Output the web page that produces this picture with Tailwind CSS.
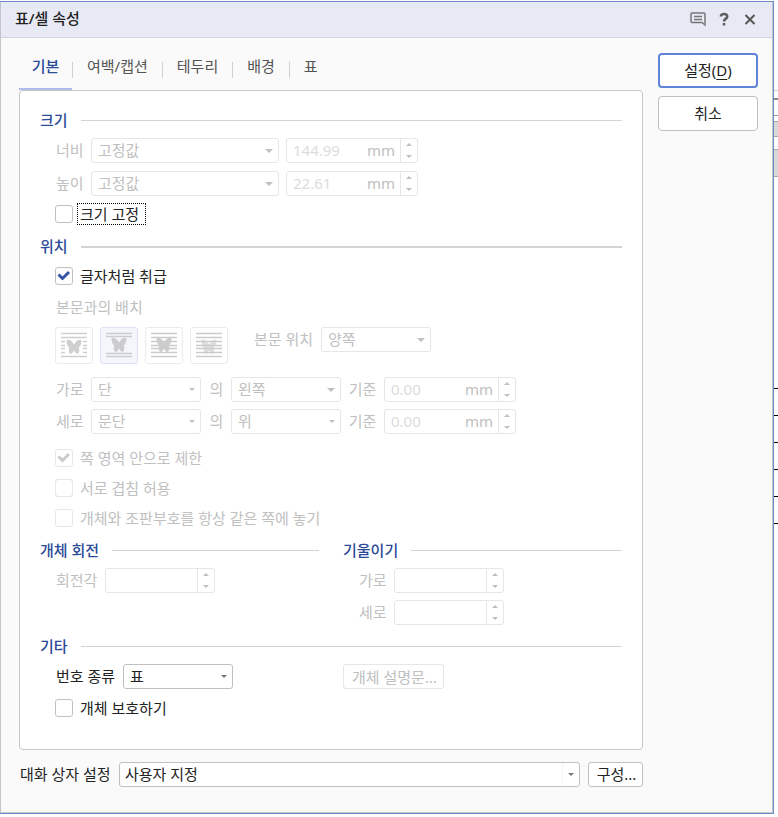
<!DOCTYPE html>
<html lang="ko">
<head>
  <meta charset="UTF-8">
  <meta name="viewport" content="width=device-width, initial-scale=1.0">
  <title>표/셀 속성</title>
  <script src="https://cdn.jsdelivr.net/npm/@tailwindcss/browser@4"></script>
</head>
<body class="bg-white flex items-start pt-px font-['Noto_Sans','Noto_Sans_CJK_KR',sans-serif] text-[15px] leading-5 text-[#222]">

  <!-- Shared shapes -->
  <svg class="hidden">
    <symbol id="down" viewBox="0 0 8 4"><path d="M0 0h8L4 4z" fill="currentColor"/></symbol>
    <symbol id="up" viewBox="0 0 8 4"><path d="M4 0l4 4H0z" fill="currentColor"/></symbol>
    <symbol id="check" viewBox="0 0 18 18"><path d="M3.500 7.500L7.500 11.500L14 5" fill="none" stroke="currentColor" stroke-width="3"/></symbol>
    <symbol id="butterfly" viewBox="0 0 16 16"><path d="M0 1c3-1 6 1 8 5 2-4 5-6 8-5 0 4-1 7-3 8 1 2 1 5-1 7-2 0-3-2-4-4-1 2-2 4-4 4-2-2-2-5-1-7-2-1-3-4-3-8z" fill="currentColor"/></symbol>
  </svg>

  <main class="flex-1 border-t border-r border-b border-[#6f8ac8]">
    <div class="border-l border-r border-b border-[#c4c5cc] bg-[#fafafa]">

      <!-- Title bar -->
      <header class="h-9 border-b border-[#d0d4e6] bg-[#e7e9f4] pl-[14px] pr-[14px] flex items-center justify-between">
        <h1 class="font-medium pb-1">표/셀 속성</h1>
        <div class="flex items-center gap-3 pb-0.5 text-[#666]">
          <button aria-label="의견" class="w-4 h-4">
            <svg viewBox="0 0 16 16" class="w-4 h-4" fill="none" stroke="#777" stroke-width="1.500"><path d="M2 2h12q1 0 1 1v11l-3-2.500H2q-1 0-1-1V3q0-1 1-1z"/><path d="M4 5.500h8M4 8.500h8"/></svg>
          </button>
          <button aria-label="도움말" class="w-3 h-4">
            <svg viewBox="0 0 12 16" class="w-3 h-4" fill="none" stroke="#5c5c5c" stroke-width="2.500"><path d="M2.800 5.500C3 2 9.300 2 9.300 5.500c0 2.300-3.300 2-3.300 5M6 12v2.500"/></svg>
          </button>
          <button aria-label="닫기" class="w-4 h-4">
            <svg viewBox="0 0 16 16" class="w-4 h-4" fill="none" stroke="#555" stroke-width="2"><path d="M3.500 4l9 9M12.500 4l-9 9"/></svg>
          </button>
        </div>
      </header>

      <div class="flex gap-[15px] pl-[18px] pr-[14px] pb-[25px]">
        <div class="flex-1">

          <!-- Tabs -->
          <nav class="flex h-[52px] text-[#555]">
            <button class="w-[53px] pb-[6px] border-b-2 border-[#aebce8] pt-3 font-medium text-[#2b4a98]">기본</button>
            <span class="w-px h-4 mt-6 bg-[#d0d0d0]"></span>
            <button class="px-[14px] pt-1">여백/캡션</button>
            <span class="w-px h-4 mt-6 bg-[#d0d0d0]"></span>
            <button class="px-[14px] pt-1">테두리</button>
            <span class="w-px h-4 mt-6 bg-[#d0d0d0]"></span>
            <button class="px-[14px] pt-1">배경</button>
            <span class="w-px h-4 mt-6 bg-[#d0d0d0]"></span>
            <button class="px-[14px] pt-1">표</button>
          </nav>

          <div class="border border-[#c6c6c6] rounded bg-white px-5 pt-[19px] pb-[30px]">

            <!-- Size -->
            <section>
              <div class="flex items-center gap-[13px] h-[21px]">
                <h2 class="font-medium pb-0.5 text-[#2b4a98]">크기</h2>
                <span class="flex-1 h-px bg-[#d4d4d4]"></span>
              </div>
              <div class="pl-[15px] mt-[7px] flex flex-col gap-2 text-[#c0c0c0]">
                <div class="flex items-center">
                  <label for="width-type" class="w-9 pl-px pb-0.5">너비</label>
                  <div class="relative w-[188px]">
                    <select id="width-type" disabled class="appearance-none block w-full h-[25px] border border-[#e6e6e6] rounded-[3px] pl-[6px] pb-0.5 disabled:opacity-100"><option>고정값</option></select>
                    <svg class="absolute right-[6px] top-[11px] w-2 h-1 pointer-events-none"><use href="#down"/></svg>
                  </div>
                  <div class="ml-[7px] w-[132px] h-[25px] flex items-center border border-[#e6e6e6] rounded-[3px]">
                    <input aria-label="너비 값" disabled value="144.99" class="min-w-0 flex-1 pl-[6px] pb-0.5 text-[#dcdcdc]">
                    <span class="mr-[5px] pb-0.5">mm</span>
                    <div class="h-full w-[17px] border-l border-[#e6e6e6] flex flex-col items-center justify-between py-1">
                      <button disabled aria-label="증가"><svg class="w-[6px] h-[3px] block"><use href="#up"/></svg></button>
                      <button disabled aria-label="감소"><svg class="w-[6px] h-[3px] block"><use href="#down"/></svg></button>
                    </div>
                  </div>
                </div>
                <div class="flex items-center">
                  <label for="height-type" class="w-9 pl-px pb-0.5">높이</label>
                  <div class="relative w-[188px]">
                    <select id="height-type" disabled class="appearance-none block w-full h-[25px] border border-[#e6e6e6] rounded-[3px] pl-[6px] pb-0.5 disabled:opacity-100"><option>고정값</option></select>
                    <svg class="absolute right-[6px] top-[11px] w-2 h-1 pointer-events-none"><use href="#down"/></svg>
                  </div>
                  <div class="ml-[7px] w-[132px] h-[25px] flex items-center border border-[#e6e6e6] rounded-[3px]">
                    <input aria-label="높이 값" disabled value="22.61" class="min-w-0 flex-1 pl-[6px] pb-0.5 text-[#dcdcdc]">
                    <span class="mr-[5px] pb-0.5">mm</span>
                    <div class="h-full w-[17px] border-l border-[#e6e6e6] flex flex-col items-center justify-between py-1">
                      <button disabled aria-label="증가"><svg class="w-[6px] h-[3px] block"><use href="#up"/></svg></button>
                      <button disabled aria-label="감소"><svg class="w-[6px] h-[3px] block"><use href="#down"/></svg></button>
                    </div>
                  </div>
                </div>
              </div>
              <div class="pl-[15px] mt-[7px] h-[22px] flex items-center">
                <input id="fix-size" type="checkbox" class="appearance-none w-[18px] h-[18px] border border-[#c0c0c0] rounded-[3px]">
                <label for="fix-size" class="ml-1 border border-dotted border-black pl-0.5 pr-[6px]">크기 고정</label>
              </div>
            </section>

            <!-- Position -->
            <section class="mt-[11px]">
              <div class="flex items-center gap-[13px] h-[21px]">
                <h2 class="font-medium pb-0.5 text-[#2b4a98]">위치</h2>
                <span class="flex-1 h-0.5 bg-[#d4d4d4]"></span>
              </div>
              <div class="pl-[15px] mt-2 h-[22px] flex items-center">
                <div class="relative w-[18px] h-[18px]">
                  <input id="as-char" type="checkbox" checked class="appearance-none block w-[18px] h-[18px] border border-[#c0c0c0] rounded-[3px]">
                  <svg class="absolute inset-0 w-[18px] h-[18px] text-[#3554a5] pointer-events-none"><use href="#check"/></svg>
                </div>
                <label for="as-char" class="ml-[7px]">글자처럼 취급</label>
              </div>
              <div class="pl-[15px] text-[#c0c0c0]">
                <p class="mt-[9px] pl-px leading-[22px]">본문과의 배치</p>
                <div class="mt-[9px] flex items-start">
                  <div class="flex gap-[7px]">
                    <button disabled aria-label="어울림" class="w-[38px] h-[37px] border border-[#ebebeb] rounded-[3px]">
                      <svg viewBox="0 0 36 36" class="w-9 h-9 block text-[#cfcfcf]"><path d="M5 5.500h26M5 9.500h26M5 13.500h4M27 13.500h4M5 17.500h4M27 17.500h4M5 20.500h4M27 20.500h4M5 24.500h4M27 24.500h4M5 28.500h26" stroke="currentColor" stroke-width="1.300"/><use href="#butterfly" x="10" y="11" width="16" height="15"/></svg>
                    </button>
                    <button disabled aria-label="자리 차지" class="w-[38px] h-[37px] border border-[#dce1f4] rounded-[3px] bg-[#f4f6fc]">
                      <svg viewBox="0 0 36 36" class="w-9 h-9 block text-[#cccccf]"><path d="M5 5.500h26M5 8.500h26M5 25.500h26M5 28.500h26" stroke="currentColor" stroke-width="1.300"/><use href="#butterfly" x="10" y="9" width="16" height="15"/></svg>
                    </button>
                    <button disabled aria-label="글 앞으로" class="w-[38px] h-[37px] border border-[#ebebeb] rounded-[3px]">
                      <svg viewBox="0 0 36 36" class="w-9 h-9 block text-[#cbcbcb]"><path d="M5 5.500h26M5 9.500h26M5 13.500h26M5 17.500h26M5 20.500h26M5 24.500h26M5 28.500h26" stroke="currentColor" stroke-width="1.300"/><use href="#butterfly" x="10" y="9" width="16" height="15"/></svg>
                    </button>
                    <button disabled aria-label="글 뒤로" class="w-[38px] h-[37px] border border-[#ebebeb] rounded-[3px]">
                      <svg viewBox="0 0 36 36" class="w-9 h-9 block text-[#cbcbcb]"><use href="#butterfly" x="10" y="11" width="16" height="15" opacity=".6"/><path d="M5 5.500h26M5 9.500h26M5 13.500h26M5 17.500h26M5 20.500h26M5 24.500h26M5 28.500h26" stroke="currentColor" stroke-width="1.300"/></svg>
                    </button>
                  </div>
                  <div class="ml-[25px] flex items-center">
                    <label for="text-side" class="w-[68px] pl-px pb-0.5">본문 위치</label>
                    <div class="relative w-[110px]">
                      <select id="text-side" disabled class="appearance-none block w-full h-[25px] border border-[#e6e6e6] rounded-[3px] pl-[6px] pb-0.5 disabled:opacity-100"><option>양쪽</option></select>
                      <svg class="absolute right-[6px] top-[11px] w-2 h-1 pointer-events-none"><use href="#down"/></svg>
                    </div>
                  </div>
                </div>
                <div class="mt-[13px] flex flex-col gap-[7px]">
                  <div class="flex items-center">
                    <label for="x-base" class="w-9 pl-px pb-0.5">가로</label>
                    <div class="relative w-[110px]">
                      <select id="x-base" disabled class="appearance-none block w-full h-[25px] border border-[#e6e6e6] rounded-[3px] pl-[6px] pb-0.5 disabled:opacity-100"><option>단</option></select>
                      <svg class="absolute right-[6px] top-[11px] w-[6px] h-[3px] pointer-events-none"><use href="#down"/></svg>
                    </div>
                    <label for="x-align" class="w-[30px] pl-px pb-0.5 text-center">의</label>
                    <div class="relative w-[110px]">
                      <select id="x-align" disabled class="appearance-none block w-full h-[25px] border border-[#e6e6e6] rounded-[3px] pl-[6px] pb-0.5 disabled:opacity-100"><option>왼쪽</option></select>
                      <svg class="absolute right-[6px] top-[11px] w-2 h-1 pointer-events-none"><use href="#down"/></svg>
                    </div>
                    <label for="x-offset" class="w-[43px] pb-0.5 text-center">기준</label>
                    <div class="w-[132px] h-[25px] flex items-center border border-[#e6e6e6] rounded-[3px]">
                      <input id="x-offset" disabled value="0.00" class="min-w-0 flex-1 pl-[6px] pb-0.5 text-[#dcdcdc]">
                      <span class="mr-[5px] pb-0.5">mm</span>
                      <div class="h-full w-[17px] border-l border-[#e6e6e6] flex flex-col items-center justify-between py-1">
                        <button disabled aria-label="증가"><svg class="w-[6px] h-[3px] block"><use href="#up"/></svg></button>
                        <button disabled aria-label="감소"><svg class="w-[6px] h-[3px] block"><use href="#down"/></svg></button>
                      </div>
                    </div>
                  </div>
                  <div class="flex items-center">
                    <label for="y-base" class="w-9 pl-px pb-0.5">세로</label>
                    <div class="relative w-[110px]">
                      <select id="y-base" disabled class="appearance-none block w-full h-[25px] border border-[#e6e6e6] rounded-[3px] pl-[6px] pb-0.5 disabled:opacity-100"><option>문단</option></select>
                      <svg class="absolute right-[6px] top-[11px] w-[6px] h-[3px] pointer-events-none"><use href="#down"/></svg>
                    </div>
                    <label for="y-align" class="w-[30px] pl-px pb-0.5 text-center">의</label>
                    <div class="relative w-[110px]">
                      <select id="y-align" disabled class="appearance-none block w-full h-[25px] border border-[#e6e6e6] rounded-[3px] pl-[6px] pb-0.5 disabled:opacity-100"><option>위</option></select>
                      <svg class="absolute right-[6px] top-[11px] w-[6px] h-[3px] pointer-events-none"><use href="#down"/></svg>
                    </div>
                    <label for="y-offset" class="w-[43px] pb-0.5 text-center">기준</label>
                    <div class="w-[132px] h-[25px] flex items-center border border-[#e6e6e6] rounded-[3px]">
                      <input id="y-offset" disabled value="0.00" class="min-w-0 flex-1 pl-[6px] pb-0.5 text-[#dcdcdc]">
                      <span class="mr-[5px] pb-0.5">mm</span>
                      <div class="h-full w-[17px] border-l border-[#e6e6e6] flex flex-col items-center justify-between py-1">
                        <button disabled aria-label="증가"><svg class="w-[6px] h-[3px] block"><use href="#up"/></svg></button>
                        <button disabled aria-label="감소"><svg class="w-[6px] h-[3px] block"><use href="#down"/></svg></button>
                      </div>
                    </div>
                  </div>
                </div>
                <div class="mt-[13px] flex flex-col gap-2">
                  <div class="h-[22px] flex items-center">
                    <div class="relative w-[18px] h-[18px]">
                      <input id="in-page" type="checkbox" checked disabled class="appearance-none block w-[18px] h-[18px] border border-[#e6e6e6] rounded-[3px]">
                      <svg class="absolute inset-0 w-[18px] h-[18px] text-[#cacaca] pointer-events-none"><use href="#check"/></svg>
                    </div>
                    <label for="in-page" class="ml-[7px]">쪽 영역 안으로 제한</label>
                  </div>
                  <div class="h-[22px] flex items-center">
                    <input id="overlap" type="checkbox" disabled class="appearance-none w-[18px] h-[18px] border border-[#e6e6e6] rounded-[3px]">
                    <label for="overlap" class="ml-[7px]">서로 겹침 허용</label>
                  </div>
                  <div class="h-[22px] flex items-center">
                    <input id="same-page" type="checkbox" disabled class="appearance-none w-[18px] h-[18px] border border-[#e6e6e6] rounded-[3px]">
                    <label for="same-page" class="ml-[7px]">개체와 조판부호를 항상 같은 쪽에 놓기</label>
                  </div>
                </div>
              </div>
            </section>

            <!-- Rotation and skew -->
            <div class="mt-[11px] grid grid-cols-2 gap-x-6">
              <section>
                <div class="flex items-center gap-[13px] h-[21px]">
                  <h2 class="font-medium pb-0.5 text-[#2b4a98]">개체 회전</h2>
                  <span class="flex-1 h-px bg-[#d4d4d4]"></span>
                </div>
                <div class="pl-[15px] mt-[7px] flex items-center text-[#c0c0c0]">
                  <label for="angle" class="w-[50px] pl-px pb-0.5">회전각</label>
                  <div class="w-[110px] h-[25px] flex items-center border border-[#e6e6e6] rounded-[3px]">
                    <input id="angle" disabled class="min-w-0 flex-1 pl-[6px]">
                    <div class="h-full w-[17px] border-l border-[#e6e6e6] flex flex-col items-center justify-between py-1">
                      <button disabled aria-label="증가"><svg class="w-[6px] h-[3px] block"><use href="#up"/></svg></button>
                      <button disabled aria-label="감소"><svg class="w-[6px] h-[3px] block"><use href="#down"/></svg></button>
                    </div>
                  </div>
                </div>
              </section>
              <section>
                <div class="flex items-center gap-[13px] h-[21px]">
                  <h2 class="font-medium pb-0.5 text-[#2b4a98]">기울이기</h2>
                  <span class="flex-1 h-px bg-[#d4d4d4]"></span>
                </div>
                <div class="pl-[15px] mt-[7px] flex flex-col gap-[7px] text-[#c0c0c0]">
                  <div class="flex items-center">
                    <label for="skew-x" class="w-9 pl-px pb-0.5">가로</label>
                    <div class="w-[110px] h-[25px] flex items-center border border-[#e6e6e6] rounded-[3px]">
                      <input id="skew-x" disabled class="min-w-0 flex-1 pl-[6px]">
                      <div class="h-full w-[17px] border-l border-[#e6e6e6] flex flex-col items-center justify-between py-1">
                        <button disabled aria-label="증가"><svg class="w-[6px] h-[3px] block"><use href="#up"/></svg></button>
                        <button disabled aria-label="감소"><svg class="w-[6px] h-[3px] block"><use href="#down"/></svg></button>
                      </div>
                    </div>
                  </div>
                  <div class="flex items-center">
                    <label for="skew-y" class="w-9 pl-px pb-0.5">세로</label>
                    <div class="w-[110px] h-[25px] flex items-center border border-[#e6e6e6] rounded-[3px]">
                      <input id="skew-y" disabled class="min-w-0 flex-1 pl-[6px]">
                      <div class="h-full w-[17px] border-l border-[#e6e6e6] flex flex-col items-center justify-between py-1">
                        <button disabled aria-label="증가"><svg class="w-[6px] h-[3px] block"><use href="#up"/></svg></button>
                        <button disabled aria-label="감소"><svg class="w-[6px] h-[3px] block"><use href="#down"/></svg></button>
                      </div>
                    </div>
                  </div>
                </div>
              </section>
            </div>

            <!-- Misc -->
            <section class="mt-[11px]">
              <div class="flex items-center gap-[13px] h-[21px]">
                <h2 class="font-medium pb-0.5 text-[#2b4a98]">기타</h2>
                <span class="flex-1 h-px bg-[#d4d4d4]"></span>
              </div>
              <div class="mt-[7px] grid grid-cols-2 gap-x-6">
                <div class="pl-[15px] flex items-center">
                  <label for="number-type" class="w-[68px] pl-px pb-0.5">번호 종류</label>
                  <div class="relative w-[110px]">
                    <select id="number-type" class="appearance-none block w-full h-[25px] border border-[#c0c0c0] rounded-[3px] pl-[6px] pb-0.5"><option>표</option></select>
                    <svg class="absolute right-[6px] top-[11px] w-[6px] h-[3px] text-[#777] pointer-events-none"><use href="#down"/></svg>
                  </div>
                </div>
                <button disabled class="w-[101px] h-[25px] border border-[#e6e6e6] rounded-[3px] pl-0.5 text-[#c0c0c0]">개체 설명문...</button>
              </div>
              <div class="pl-[15px] mt-2 h-[22px] flex items-center">
                <input id="protect" type="checkbox" class="appearance-none w-[18px] h-[18px] border border-[#c0c0c0] rounded-[3px]">
                <label for="protect" class="ml-[7px]">개체 보호하기</label>
              </div>
            </section>
          </div>

          <!-- Preset row -->
          <div class="mt-3 flex items-center">
            <label for="preset" class="w-[100px] pl-px pb-0.5">대화 상자 설정</label>
            <div class="relative flex-1">
              <select id="preset" class="appearance-none block w-full h-[25px] border border-[#c0c0c0] rounded-[3px] bg-white pl-[5px] pb-0.5"><option>사용자 지정</option></select>
              <span class="absolute right-[17px] top-px h-[23px] w-px bg-[#f4f4f4]"></span>
              <svg class="absolute right-[6px] top-[11px] w-[6px] h-[3px] text-[#777] pointer-events-none"><use href="#down"/></svg>
            </div>
            <button class="ml-2 w-[55px] h-[25px] border border-[#c0c0c0] rounded-[3px] bg-white pl-0.5 pb-0.5">구성...</button>
          </div>
        </div>

        <!-- Dialog buttons -->
        <div class="w-[100px] pt-[15px] flex flex-col gap-2">
          <button class="h-[35px] border-2 border-[#6083da] rounded bg-white pb-0.5">설정(<u class="underline-offset-3">D</u>)</button>
          <button class="h-[35px] border border-[#c0c0c0] rounded bg-white pb-0.5">취소</button>
        </div>
      </div>
    </div>
  </main>

  <!-- Edge of the document behind the dialog -->
  <aside class="w-1 flex flex-col">
    <div class="h-[90px] border-b border-[#ccc]"></div>
    <div class="h-[25px] border-b border-[#999] pt-[7px]"><div class="h-0.5 bg-[#888]"></div></div>
    <div class="h-4 mt-[5px] bg-[#d8d8d8] border-t border-b border-[#aaa]"></div>
    <div class="h-3"></div>
    <div class="h-7 bg-[#d8d8d8] border-t border-b border-[#aaa]"></div>
    <div class="mt-[211px] flex flex-col gap-[26px]">
      <div class="h-px bg-black"></div>
      <div class="h-px bg-black"></div>
      <div class="h-px bg-black"></div>
      <div class="h-px bg-black"></div>
      <div class="h-px bg-black"></div>
      <div class="h-px bg-black"></div>
    </div>
  </aside>

</body>
</html>
